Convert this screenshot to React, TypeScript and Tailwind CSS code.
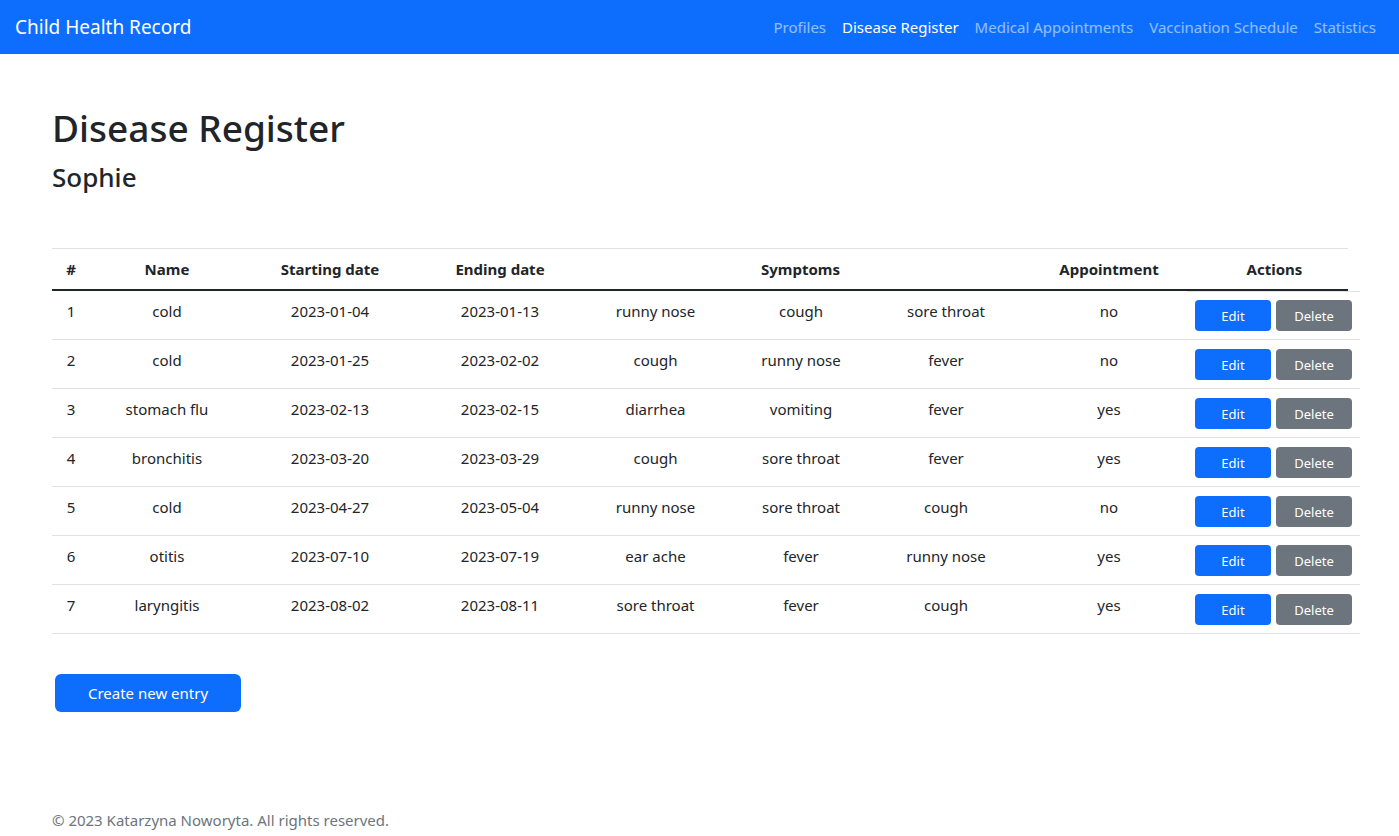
import React from 'react'

type Entry = {
  id: number
  name: string
  start: string
  end: string
  symptoms: [string, string, string]
  appointment: string
}

const entries: Entry[] = [
  { id: 1, name: 'cold', start: '2023-01-04', end: '2023-01-13', symptoms: ['runny nose', 'cough', 'sore throat'], appointment: 'no' },
  { id: 2, name: 'cold', start: '2023-01-25', end: '2023-02-02', symptoms: ['cough', 'runny nose', 'fever'], appointment: 'no' },
  { id: 3, name: 'stomach flu', start: '2023-02-13', end: '2023-02-15', symptoms: ['diarrhea', 'vomiting', 'fever'], appointment: 'yes' },
  { id: 4, name: 'bronchitis', start: '2023-03-20', end: '2023-03-29', symptoms: ['cough', 'sore throat', 'fever'], appointment: 'yes' },
  { id: 5, name: 'cold', start: '2023-04-27', end: '2023-05-04', symptoms: ['runny nose', 'sore throat', 'cough'], appointment: 'no' },
  { id: 6, name: 'otitis', start: '2023-07-10', end: '2023-07-19', symptoms: ['ear ache', 'fever', 'runny nose'], appointment: 'yes' },
  { id: 7, name: 'laryngitis', start: '2023-08-02', end: '2023-08-11', symptoms: ['sore throat', 'fever', 'cough'], appointment: 'yes' },
]

const navLinks = ['Profiles', 'Disease Register', 'Medical Appointments', 'Vaccination Schedule', 'Statistics']

export default function App() {
  return (
    <div className="min-h-[836px] bg-white text-[#212529] font-['Noto_Sans','Liberation_Sans',sans-serif] text-[15px]">
      {/* navbar */}
      <nav className="h-[54px] bg-[#0d6efd] flex items-center justify-between pl-[15px] pr-[15px]">
        <span className="text-[19px] text-white leading-none">Child Health Record</span>
        <ul className="flex items-center">
          {navLinks.map((l) => (
            <li
              key={l}
              className={
                'px-2 text-[15px] ' +
                (l === 'Disease Register' ? 'text-white' : 'text-white/55')
              }
            >
              {l}
            </li>
          ))}
        </ul>
      </nav>

      <main className="px-[52px] pt-[50px]">
        <h1 className="text-[37px] font-medium leading-[48px] mb-2">Disease Register</h1>
        <h3 className="text-[26px] font-medium leading-[34px]">Sophie</h3>

        {/* table */}
        <div className="mt-[54px] w-[1296px]">
          <div className="flex border-t border-[#dee2e6] border-b-2 border-b-[#212529] font-bold text-center leading-6">
            <div className="w-[38px] py-2">#</div>
            <div className="w-[154px] py-2">Name</div>
            <div className="w-[172px] py-2">Starting date</div>
            <div className="w-[168px] py-2">Ending date</div>
            <div className="w-[433px] py-2">Symptoms</div>
            <div className="w-[184px] py-2">Appointment</div>
            <div className="w-[147px] py-2">Actions</div>
          </div>

          <div className="w-[1308px]">
            {entries.map((e, i) => (
              <div key={e.id} className="flex items-stretch text-center leading-6">
                <div className="flex border-b border-[#dee2e6]">
                  <div className="w-[38px] pt-2">{e.id}</div>
                  <div className="w-[154px] pt-2">{e.name}</div>
                  <div className="w-[172px] pt-2">{e.start}</div>
                  <div className="w-[168px] pt-2">{e.end}</div>
                  <div className="w-[143px] pt-2">{e.symptoms[0]}</div>
                  <div className="w-[148px] pt-2">{e.symptoms[1]}</div>
                  <div className="w-[142px] pt-2">{e.symptoms[2]}</div>
                  <div className="w-[170px] pt-2 pl-[14px]">{e.appointment}</div>
                </div>
                <div
                  className={
                    'w-[173px] flex gap-[5px] px-2 pb-2 border-b border-[#dee2e6] ' +
                    (i === 0 ? 'border-t pt-2' : 'pt-[9px]')
                  }
                >
                  <button className="w-[76px] h-[31px] rounded-[4px] bg-[#0d6efd] text-white text-[13px]">Edit</button>
                  <button className="w-[76px] h-[31px] rounded-[4px] bg-[#6c757d] text-white text-[13px]">Delete</button>
                </div>
              </div>
            ))}
          </div>
        </div>

        <button className="mt-[40px] ml-[3px] w-[186px] h-[38px] rounded-[6px] bg-[#0d6efd] text-white text-[15px]">
          Create new entry
        </button>

        <footer className="mt-[96px] text-[#6c757d] leading-6">
          © 2023 Katarzyna Noworyta. All rights reserved.
        </footer>
      </main>
    </div>
  )
}
